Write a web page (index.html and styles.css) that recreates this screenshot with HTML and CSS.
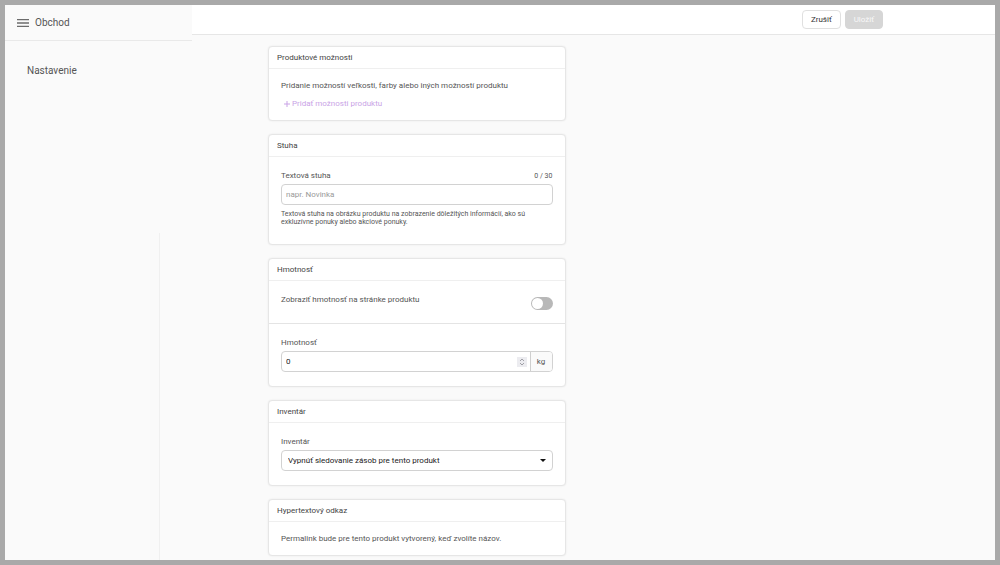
FILE: index.html
```html
<!DOCTYPE html>
<html lang="sk">
<head>
  <meta charset="UTF-8" />
  <meta name="viewport" content="width=device-width, initial-scale=1.0"/>
  <title>Obchod</title>
  <link rel="stylesheet" href="styles.css">
</head>
<body>

  <div class="app">
    <aside class="sidebar">
      <div class="sidebar-head">
        <button type="button" class="menu-btn" aria-label="Menu">
          <svg width="12" height="8" viewBox="0 0 12 8"><path d="M0 .7h12M0 4h12M0 7.3h12" stroke="#6c6c6c" stroke-width="1.3"/></svg>
        </button>
        <span class="shop-name">Obchod</span>
      </div>
      <a href="#" class="nav-link">Nastavenie</a>
      <div class="rail"></div>
    </aside>

    <div class="content">
      <header class="topbar">
        <button type="button" class="btn">Zrušiť</button>
        <button type="button" class="btn btn-save" disabled>Uložiť</button>
      </header>

      <main class="columns">
        <form class="cards">
          <section class="card">
            <h2>Produktové možnosti</h2>
            <div class="card-body">
              <p>Pridanie možností veľkosti, farby alebo iných možností produktu</p>
              <a href="#" class="add-link">
                <svg width="6" height="6" viewBox="0 0 6 6"><path d="M3 0v6M0 3h6" stroke="currentColor"/></svg>
                Pridať možnosti produktu
              </a>
            </div>
          </section>

          <section class="card">
            <h2>Stuha</h2>
            <div class="card-body">
              <div class="label-row">
                <label for="ribbon">Textová stuha</label>
                <span class="counter">0 / 30</span>
              </div>
              <input type="text" id="ribbon" class="control" maxlength="30" placeholder="napr. Novinka" />
              <p class="help">Textová stuha na obrázku produktu na zobrazenie dôležitých informácií, ako sú exkluzívne ponuky alebo akciové ponuky.</p>
            </div>
          </section>

          <section class="card">
            <h2>Hmotnosť</h2>
            <div class="card-body toggle-row">
              <label for="showWeight">Zobraziť hmotnosť na stránke produktu</label>
              <input type="checkbox" id="showWeight" class="toggle" />
            </div>
            <div class="card-body divided">
              <div class="label-row">
                <label for="weight">Hmotnosť</label>
              </div>
              <div class="control weight">
                <input type="number" id="weight" value="0" />
                <svg class="spin" width="10" height="10" viewBox="0 0 10 10"><path d="M3 4l2-2 2 2M3 6l2 2 2-2" fill="none" stroke="#a0a0a6"/></svg>
                <span class="unit">kg</span>
              </div>
            </div>
          </section>

          <section class="card">
            <h2>Inventár</h2>
            <div class="card-body">
              <div class="label-row">
                <label for="stock">Inventár</label>
              </div>
              <div class="select-wrap">
                <select id="stock" class="control">
                  <option>Vypnúť sledovanie zásob pre tento produkt</option>
                </select>
                <svg class="arrow" width="6" height="3" viewBox="0 0 6 3"><path d="M0 0h6L3 3z" fill="#111"/></svg>
              </div>
            </div>
          </section>

          <section class="card">
            <h2>Hypertextový odkaz</h2>
            <div class="card-body">
              <p>Permalink bude pre tento produkt vytvorený, keď zvolíte názov.</p>
            </div>
          </section>
        </form>
      </main>
    </div>
  </div>

</body>
</html>
```
FILE: styles.css
```css
* {
  box-sizing: border-box;
}
body {
  margin: 0;
  padding: 5px;
  height: 100vh;
  background: #a9a9a9;
  color: #555;
  font-family: Roboto, "Liberation Sans", sans-serif;
  font-size: 8px;
  line-height: 10px;
}
h2, p {
  margin: 0;
}
a {
  text-decoration: none;
}
svg {
  display: block;
}
input, select, button {
  font: inherit;
}
.app {
  display: flex;
  height: 100%;
  background: #fafafa;
  overflow: hidden;
}

/* sidebar */
.sidebar {
  display: flex;
  flex-direction: column;
  flex: 0 0 187px;
}
.sidebar-head {
  display: flex;
  align-items: center;
  gap: 6px;
  height: 36px;
  padding: 0 12px;
  border-bottom: 1px solid #e9e9e9;
}
.menu-btn {
  padding: 0;
  border: none;
  background: none;
}
.shop-name, .nav-link {
  color: #555;
  font-size: 10px;
  line-height: 12px;
}
.nav-link {
  padding: 24px 22px 0;
}
.rail {
  flex: 1;
  width: 155px;
  margin-top: 156px;
  border-right: 1px solid #f0f0f0;
}

/* top bar */
.content {
  flex: 1;
}
.topbar {
  display: flex;
  justify-content: flex-end;
  gap: 4px;
  height: 30px;
  padding: 5px 112px 0 77px;
  background: #fff;
  border-bottom: 1px solid #e6e6e6;
}
.btn {
  height: 19px;
  padding: 0 8px;
  border: 1px solid #e0e0e0;
  border-radius: 4px;
  background: #fff;
  color: #333;
}
.btn-save {
  border-color: #d6d6d6;
  background: #d6d6d6;
  color: #f8f8f8;
}

/* cards */
.columns {
  display: grid;
  grid-template-columns: 1fr 1fr;
  gap: 20px;
  padding: 11px 112px 0 76px;
}
.cards {
  display: flex;
  flex-direction: column;
  gap: 13px;
}
.card {
  border: 1px solid #e6e6e6;
  border-radius: 4px;
  background: #fff;
  box-shadow: 0 0 2px rgba(0, 0, 0, 0.08);
}
.card h2 {
  height: 22px;
  padding: 0 8px;
  border-bottom: 1px solid #efefef;
  color: #444;
  font-size: 8px;
  font-weight: 400;
  line-height: 21px;
}
.card-body {
  padding: 12px 12px 11px;
}
.divided {
  border-top: 1px solid #e4e4e4;
}
.add-link {
  display: flex;
  align-items: center;
  gap: 2px;
  margin-top: 8px;
  padding-left: 3px;
  color: #c9a3e6;
}
.label-row {
  display: flex;
  justify-content: space-between;
  margin-bottom: 1px;
  line-height: 14px;
}
.counter, .help {
  font-size: 7px;
}
.help {
  margin: 5px 0 7px;
  line-height: 8px;
}

/* form controls */
.control {
  display: block;
  width: 100%;
  height: 21px;
  margin: 0 0 3px;
  padding: 0 4px;
  border: 1px solid #d2d2d2;
  border-radius: 4px;
  background: #fff;
  color: #222;
}
.control::placeholder {
  color: #999;
}
.toggle-row {
  display: flex;
  justify-content: space-between;
  height: 42px;
  line-height: 14px;
}
.toggle {
  appearance: none;
  width: 22px;
  height: 13px;
  margin: 4px 0 0;
  padding: 1px;
  border-radius: 7px;
  background: #b8b8b8;
}
.toggle::before {
  content: "";
  display: block;
  width: 11px;
  height: 11px;
  border-radius: 50%;
  background: #fff;
}
.toggle:checked::before {
  margin-left: auto;
}
.weight {
  display: flex;
  align-items: center;
  padding-right: 0;
  overflow: hidden;
}
.weight input {
  flex: 1;
  min-width: 0;
  padding: 0;
  border: none;
  outline: none;
  color: #222;
  appearance: textfield;
}
.spin {
  margin-right: 3px;
  background: #ececf0;
}
.unit {
  width: 22px;
  border-left: 1px solid #cfcfcf;
  background: #fafafa;
  line-height: 19px;
  text-align: center;
  color: #555;
}
.select-wrap {
  display: grid;
  align-items: center;
}
.select-wrap .control {
  grid-area: 1 / 1;
  padding: 0 6px;
  appearance: none;
}
.arrow {
  grid-area: 1 / 1;
  justify-self: end;
  margin: 0 7px 3px 0;
  pointer-events: none;
}
```
